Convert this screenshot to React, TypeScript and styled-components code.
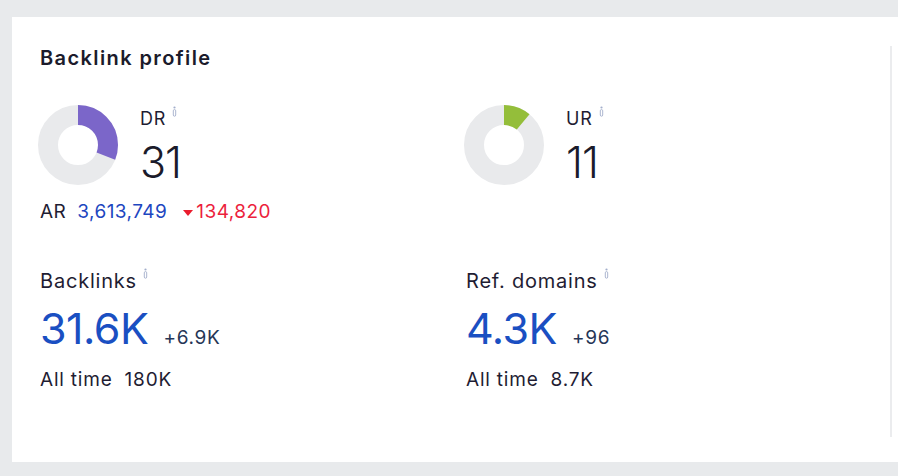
import { FC } from "react";
import styled, { createGlobalStyle } from "styled-components";

const GlobalStyle = createGlobalStyle`
  html, body {
    margin: 0;
    padding: 0;
    background: #e8eaec;
    font-family: Inter, "Noto Sans", sans-serif;
    -webkit-font-smoothing: antialiased;
  }
`;

type DonutProps = {
  value: number;
  color: string;
};

const R = 30;
const C = 2 * Math.PI * R;

const Donut: FC<DonutProps> = ({ value, color }) => (
  <DonutSvg width="80" height="80" viewBox="0 0 80 80">
    <circle cx="40" cy="40" r={R} fill="none" stroke="#e9eaec" strokeWidth="20" />
    <circle
      cx="40"
      cy="40"
      r={R}
      fill="none"
      stroke={color}
      strokeWidth="20"
      strokeDasharray={`${(C * value) / 100} ${C}`}
      transform="rotate(-90 40 40)"
    />
  </DonutSvg>
);

const InfoMark: FC = () => (
  <InfoSvg width="5" height="11" viewBox="0 0 5 11">
    <circle cx="2.5" cy="1.5" r="1.1" fill="#a3aecb" />
    <rect x="1.3" y="3.6" width="2.4" height="6.6" rx="1.2" fill="none" stroke="#a3aecb" strokeWidth="0.9" />
  </InfoSvg>
);

type RatingProps = {
  label: string;
  value: number;
  color: string;
};

const Rating: FC<RatingProps> = ({ label, value, color }) => (
  <RatingRow>
    <Donut value={value} color={color} />
    <RatingText>
      <Label $size={18}>
        {label}
        <InfoMark />
      </Label>
      <RatingValue>{value}</RatingValue>
    </RatingText>
  </RatingRow>
);

type StatProps = {
  label: string;
  value: string;
  delta: string;
  total: string;
};

const Stat: FC<StatProps> = ({ label, value, delta, total }) => (
  <StatBlock>
    <Label $size={20}>
      {label}
      <InfoMark />
    </Label>
    <StatLine>
      <BigNumber>{value}</BigNumber>
      <Delta>{delta}</Delta>
    </StatLine>
    <AllTime>
      All time<span>{total}</span>
    </AllTime>
  </StatBlock>
);

const App: FC = () => (
  <>
    <GlobalStyle />
    <Page>
      <Card>
        <Body>
          <Title>Backlink profile</Title>
          <Grid>
            <div>
              <Rating label="DR" value={31} color="#7b66c9" />
              <ArRow>
                AR<ArValue>3,613,749</ArValue>
                <ArDrop>
                  <Triangle />
                  134,820
                </ArDrop>
              </ArRow>
            </div>
            <div>
              <Rating label="UR" value={11} color="#94be3a" />
            </div>
            <Stat label="Backlinks" value="31.6K" delta="+6.9K" total="180K" />
            <Stat label="Ref. domains" value="4.3K" delta="+96" total="8.7K" />
          </Grid>
        </Body>
      </Card>
    </Page>
  </>
);

export default App;

const Page = styled.div`
  width: 898px;
  height: 476px;
  box-sizing: border-box;
  padding: 17px 0 14px 12px;
  overflow: hidden;
`;

const Card = styled.div`
  height: 445px;
  width: 900px;
  background: #fff;
  box-sizing: border-box;
  padding: 27px 0 0 26px;
`;

const Body = styled.div`
  width: 852px;
  height: 391px;
  border-right: 2px solid #ebecee;
`;

const Title = styled.div`
  font-size: 20px;
  line-height: 24px;
  font-weight: 600;
  letter-spacing: 1.4px;
  color: #1b1b2b;
  margin: 2px 0 0 2px;
`;

const Grid = styled.div`
  display: grid;
  grid-template-columns: 426px 1fr;
  margin-top: 35px;
  row-gap: 46px;
`;

const RatingRow = styled.div`
  display: flex;
  align-items: flex-start;
  gap: 22px;
`;

const DonutSvg = styled.svg`
  display: block;
  flex-shrink: 0;
`;

const RatingText = styled.div`
  display: flex;
  flex-direction: column;
  padding-top: 2px;
`;

const Label = styled.div<{ $size: number }>`
  display: flex;
  align-items: flex-start;
  gap: 6px;
  font-size: ${({ $size }) => $size}px;
  line-height: 24px;
  letter-spacing: 0.8px;
  color: #1f1d33;
`;

const InfoSvg = styled.svg`
  display: block;
  margin-top: -1px;
`;

const RatingValue = styled.div`
  font-size: 43px;
  line-height: 52px;
  font-weight: 300;
  color: #1b1b2b;
  margin-top: 5px;
  letter-spacing: -1px;
`;

const ArRow = styled.div`
  display: flex;
  align-items: center;
  margin: 13px 0 0 2px;
  font-size: 19px;
  line-height: 22px;
  letter-spacing: 0.45px;
  color: #1f1d33;
`;

const ArValue = styled.span`
  color: #1d46c0;
  margin-left: 11px;
`;

const ArDrop = styled.span`
  display: flex;
  align-items: center;
  color: #ec1f3d;
  margin-left: 16px;
  gap: 3px;
`;

const Triangle = styled.span`
  width: 0;
  height: 0;
  border-left: 5.5px solid transparent;
  border-right: 5.5px solid transparent;
  border-top: 6px solid #ea1c2d;
  margin-top: 2px;
`;

const StatBlock = styled.div`
  display: flex;
  flex-direction: column;
  padding-left: 2px;
`;

const StatLine = styled.div`
  display: flex;
  align-items: baseline;
  gap: 15px;
  margin-top: 9px;
`;

const BigNumber = styled.span`
  font-size: 43px;
  line-height: 52px;
  color: #1a4fc2;
  letter-spacing: -0.5px;
`;

const Delta = styled.span`
  font-size: 19px;
  letter-spacing: 0.7px;
  color: #263656;
`;

const AllTime = styled.div`
  font-size: 19px;
  line-height: 24px;
  letter-spacing: 0.8px;
  color: #1f1d33;
  margin-top: 14px;

  span {
    margin-left: 12px;
  }
`;
